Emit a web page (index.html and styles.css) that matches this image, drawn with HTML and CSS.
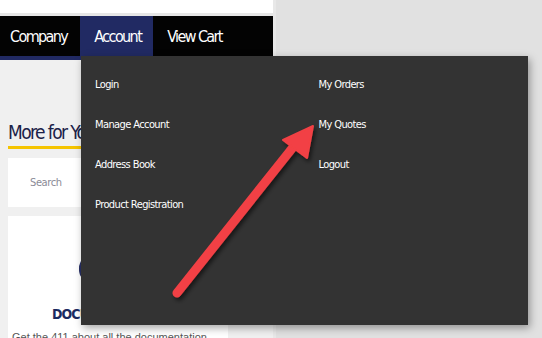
FILE: index.html
```html
<!DOCTYPE html>
<html lang="en">
<head>
    <meta charset="UTF-8">
    <title>Account menu</title>
    <link rel="stylesheet" href="styles.css">
</head>
<body>

<div class="page">
    <div class="topbar"></div>
    <nav class="nav">
        <a class="nav-item">Company</a>
        <a class="nav-item active">Account</a>
        <a class="nav-item">View Cart</a>
    </nav>
    <div class="nav-line"></div>

    <div class="content">
        <h2 class="section-title">More for You</h2>
        <div class="card search-card">
            <input type="text" class="search-input" placeholder="Search">
        </div>
        <div class="card doc-card">
            <div class="doc-icon"></div>
            <h3 class="doc-title">DOCUMENTATION</h3>
            <p class="doc-text">Get the 411 about all the documentation</p>
        </div>
    </div>
</div>

<!-- menu desplegable de cuenta -->
<div class="dropdown">
    <ul class="menu-col">
        <li>Login</li>
        <li>Manage Account</li>
        <li>Address Book</li>
        <li>Product Registration</li>
    </ul>
    <ul class="menu-col">
        <li>My Orders</li>
        <li>My Quotes</li>
        <li>Logout</li>
    </ul>
</div>

<svg class="arrow" width="542" height="338" viewBox="0 0 542 338">
    <defs>
        <filter id="shadow" x="-20%" y="-20%" width="140%" height="140%">
            <feDropShadow dx="2" dy="3" stdDeviation="2" flood-color="#000" flood-opacity="0.55"/>
        </filter>
    </defs>
    <g filter="url(#shadow)" fill="#f24144" stroke="#f24144">
        <line x1="177" y1="293" x2="294" y2="146" stroke-width="9" stroke-linecap="round"/>
        <polygon points="313,126 283,140 307,158" stroke-width="2" stroke-linejoin="round"/>
    </g>
</svg>

</body>
</html>
```

FILE: styles.css
```css
body { margin: 0; background-color: #e1e1e1; font-family: 'Open Sans', sans-serif; overflow: hidden; height: 338px; }
.page { width: 273px; height: 338px; background-color: #f0f0f0; border-right: 3px solid #e8e8e8; }
.topbar { height: 13px; background-color: #fff; border-bottom: 3px solid #e6e6e6; }
.nav { display: flex; height: 40px; background-color: #030303; }
.nav-item { display: flex; align-items: center; padding: 0 13px 0 10px; color: #fff; white-space: nowrap; font-family: 'DejaVu Sans Condensed', sans-serif; font-size: 16px; letter-spacing: -1.6px; }
.nav-item.active { background-color: #212a63; padding: 0 12px 0 14px; }
.nav-item:last-child { padding-left: 14px; }
.nav-line { height: 4px; background-color: #212a63; }
.content { padding: 0 0 0 8px; }
.section-title { margin: 60px 0 0; display: inline-block; font-family: 'DejaVu Sans Condensed', sans-serif; font-size: 19px; font-weight: normal; color: #1b2148; letter-spacing: -1.6px; padding-bottom: 2px; border-bottom: 3px solid #f5c400; line-height: 24px; white-space: nowrap; }
.card { background-color: #fff; width: 220px; }
.search-card { margin-top: 9px; height: 49px; display: flex; align-items: center; }
.search-input { border: none; outline: none; margin-left: 20px; width: 150px; font-family: 'DejaVu Sans Condensed', sans-serif; font-size: 11px; letter-spacing: -0.4px; color: #777; }
.search-input::placeholder { color: #8a8a96; }
.doc-card { margin-top: 9px; height: 130px; padding-top: 1px; }
.doc-icon { width: 16px; height: 26px; margin: 39px 0 0 71px; border-left: 2px solid #283067; border-radius: 12px 0 0 12px; }
.doc-title { margin: 24px 0 0 44px; font-family: 'DejaVu Sans Condensed', sans-serif; font-size: 14px; font-weight: bold; letter-spacing: -0.9px; color: #1b2a60; }
.doc-text { margin: 9px 0 0 4px; font-family: 'Liberation Sans', sans-serif; font-size: 11px; color: #555; white-space: nowrap; }
.dropdown { position: absolute; left: 81px; top: 56px; width: 447px; height: 269px; background-color: #333; box-shadow: 2px 3px 8px rgba(0, 0, 0, 0.35); display: flex; }
.menu-col { list-style: none; margin: 0; padding: 21px 0 0 14px; width: 210px; }
.menu-col li { height: 40px; line-height: 16px; color: #fff; font-family: 'DejaVu Sans Condensed', sans-serif; font-size: 11px; letter-spacing: -0.6px; }
.arrow { position: absolute; left: 0; top: 0; }
```
